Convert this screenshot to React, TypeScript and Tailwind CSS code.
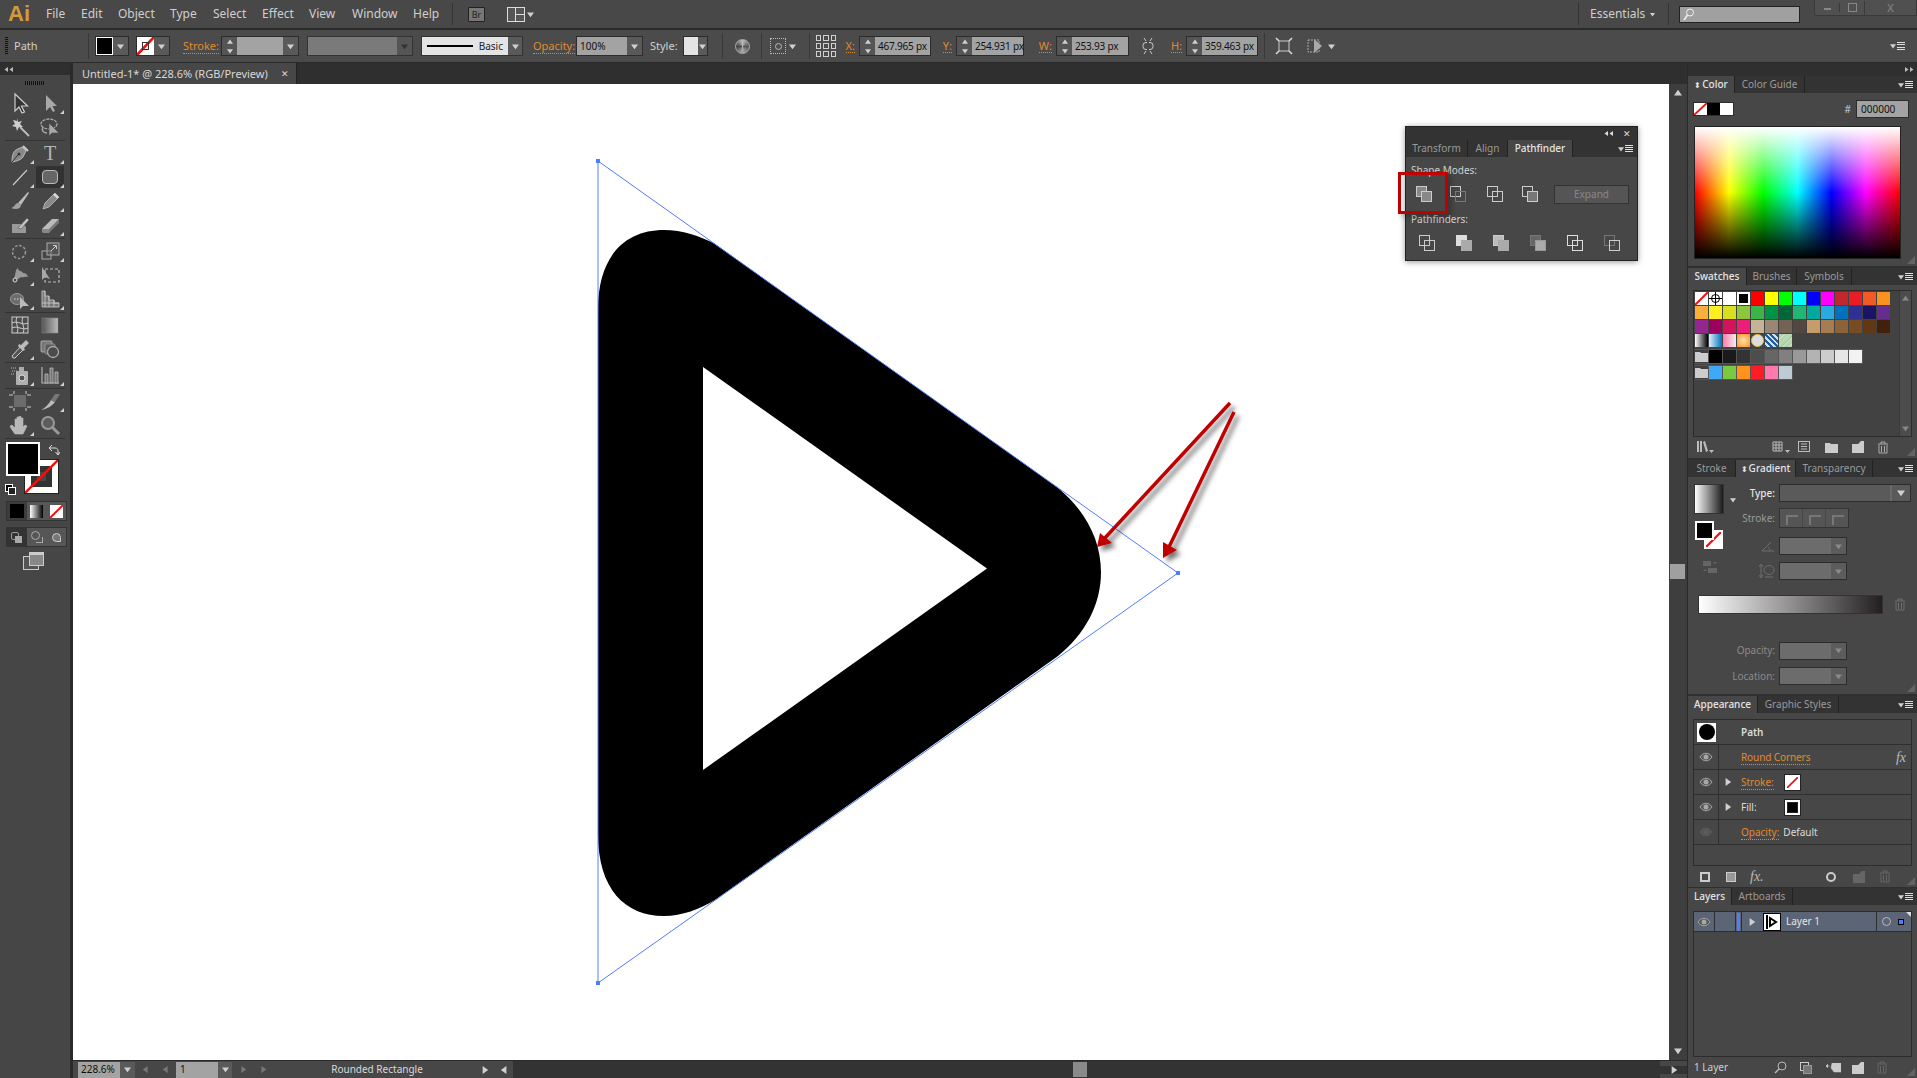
import React from "react";

type Dir = "up" | "down" | "left" | "right";

function Tri({ dir = "down", size = 7, className = "fill-[#d0d0d0]" }: { dir?: Dir; size?: number; className?: string }) {
  const pts = { up: "0,8 5,1 10,8", down: "0,2 10,2 5,9", left: "8,0 8,10 1,5", right: "2,0 2,10 9,5" }[dir];
  return (
    <svg width={size} height={size} viewBox="0 0 10 10" className="shrink-0">
      <polygon points={pts} className={className} />
    </svg>
  );
}

function Svg({ w = 22, h = 22, vb, children }: { w?: number; h?: number; vb?: string; children: React.ReactNode }) {
  return (
    <svg width={w} height={h} viewBox={vb ?? `0 0 ${w} ${h}`} className="shrink-0 block" fill="none">
      {children}
    </svg>
  );
}

const NoneSwatch = ({ className }: { className: string }) => (
  <div className={`relative shrink-0 overflow-hidden bg-white ${className}`}>
    <svg viewBox="0 0 20 20" className="absolute inset-0 h-full w-full" preserveAspectRatio="none">
      <line x1="0" y1="20" x2="20" y2="0" stroke="#f01010" strokeWidth="3" />
    </svg>
  </div>
);

const DoubleLeft = ({ className = "fill-[#bbb]" }: { className?: string }) => (
  <div className="flex">
    <Tri dir="left" size={5} className={className} />
    <Tri dir="left" size={5} className={className} />
  </div>
);

const toolIcons: Record<string, React.ReactNode> = {
  select: <path d="M6 2v17l4-4 3 6 2.500-1-3-6h6z" fill="#333" stroke="#ccc" strokeWidth="1.200" />,
  direct: <path d="M7 3v16l4-4 3 5 2-1-2.500-5H18z" fill="#a8a8a8" />,
  wand: (
    <>
      <path d="M11 11l9 9" stroke="#bbb" strokeWidth="2" />
      <path d="M8 2l1 4 4-1-2 3 3 3-4 0-2 4-1-4-4-1 3-2-2-4 4 1z" fill="#cfcfcf" />
    </>
  ),
  lasso: (
    <>
      <ellipse cx="10" cy="8" rx="8" ry="5" stroke="#aaa" strokeWidth="1.300" strokeDasharray="3 1" />
      <path d="M4 11c-2 4 1 6 4 6" stroke="#aaa" strokeWidth="1.300" />
      <path d="M10 7v13l3-3 7 0z" fill="#a8a8a8" stroke="#444" strokeWidth=".6" />
    </>
  ),
  pen: (
    <>
      <path d="M3 20c0-6 1-10 4-12l6-3 4 4-3 6c-2 3-6 4-11 5z" fill="#888" stroke="#ccc" strokeWidth=".8" />
      <path d="M3 20l6-7" stroke="#333" strokeWidth="1" />
      <circle cx="10" cy="12" r="1.500" fill="#333" />
      <path d="M14 4l5 5" stroke="#ccc" strokeWidth="2" />
    </>
  ),
  type: (
    <text x="11" y="18" textAnchor="middle" className="font-['Liberation_Serif',serif] text-[20px] fill-[#b4b4b4]">
      T
    </text>
  ),
  line: <path d="M4 19L18 4" stroke="#ccc" strokeWidth="1.100" />,
  rrect: <rect x="3.500" y="4.500" width="15" height="13" rx="3.500" fill="#666" stroke="#bbb" strokeWidth="1" />,
  brush: (
    <>
      <path d="M9 13L19 2l1 1-8 12z" fill="#bbb" />
      <path d="M9 13c-3 0-3 4-7 5 5 2 10 1 10-3z" fill="#a0a0a0" />
    </>
  ),
  pencil: (
    <>
      <path d="M4 19l2-6L16 3l4 4L10 17z" fill="#8a8a8a" stroke="#ccc" strokeWidth=".7" />
      <path d="M15 4l4 4" stroke="#ddd" strokeWidth="2" />
    </>
  ),
  blob: (
    <>
      <path d="M3 10h11l3 3v6H3z" fill="#999" />
      <path d="M9 14l9-10 2 2-8 9z" fill="#c4c4c4" stroke="#444" strokeWidth=".5" />
    </>
  ),
  eraser: (
    <>
      <path d="M3 15L13 5h7l-10 12H4z" fill="#bbb" />
      <path d="M3 15h7v4H4l-1-1z" fill="#888" />
      <path d="M10 15l10-10v4L10 19z" fill="#777" />
    </>
  ),
  rotate: <circle cx="10" cy="12" r="6.500" stroke="#999" strokeWidth="1.500" strokeDasharray="2.500 1.800" />,
  scale: (
    <>
      <rect x="3" y="11" width="9" height="8" stroke="#aaa" strokeWidth="1" />
      <rect x="8" y="3" width="12" height="12" stroke="#aaa" strokeWidth="1" fill="#666" fillOpacity=".4" />
      <path d="M12 11l5-5M14 5.500h3.500V9" stroke="#ccc" strokeWidth="1" />
    </>
  ),
  warp: (
    <>
      <path d="M5 15c2-6 1-9 4-11 0 4 4 2 5 5 3 0 4 1 5 4-3-1-4 1-7 0-2 2-4 2-7 2z" fill="#999" />
      <circle cx="6" cy="16" r="2" fill="#444" stroke="#ddd" strokeWidth="1" />
    </>
  ),
  free: (
    <>
      <rect x="6" y="5" width="14" height="13" stroke="#bbb" strokeWidth="1.200" strokeDasharray="3 2" />
      <path d="M3 3v13l3-3 5 2z" fill="#a8a8a8" />
    </>
  ),
  shape: (
    <>
      <ellipse cx="8" cy="11" rx="6.500" ry="5.500" fill="#6c6c6c" stroke="#999" />
      <path d="M5 11h6" stroke="#ddd" strokeDasharray="1.500 1.500" />
      <path d="M11 9v12l3-3h6z" fill="#bbb" />
    </>
  ),
  persp: <path d="M3 3h3v5h4v4h5v3h5v4H3zM6 3v16M10 8v11M15 12v7M3 15h17" fill="#777" stroke="#ccc" strokeWidth=".8" />,
  mesh: (
    <>
      <rect x="3" y="3" width="16" height="16" fill="#4c4c4c" stroke="#ccc" />
      <path d="M3 9c6-3 10 3 16 0M3 14c6-3 10 3 16 0M8 3c-3 6 3 10 0 16M14 3c-3 6 3 10 0 16" stroke="#ccc" />
    </>
  ),
  gradient: <rect x="3" y="4" width="16" height="15" fill="url(#toolgrad)" stroke="#888" strokeWidth=".5" />,
  dropper: (
    <>
      <path d="M4 20l-1-2L12 8l3 3-9 9z" fill="#555" stroke="#ccc" strokeWidth="1" />
      <path d="M12 7l5-5 3 3-5 5 1 2-2 1-5-5 1-2z" fill="#bbb" />
    </>
  ),
  blend: (
    <>
      <rect x="2" y="3" width="11" height="11" rx="1" fill="#777" stroke="#bbb" strokeWidth=".8" />
      <rect x="6" y="6" width="10" height="10" rx="1" fill="#5c5c5c" stroke="#999" strokeWidth=".8" />
      <circle cx="14" cy="14" r="5.500" fill="#4c4c4c" stroke="#aaa" strokeWidth="1.300" />
    </>
  ),
  spray: (
    <>
      <path d="M2 4h5M3 7h5M2 10h4" stroke="#bbb" strokeDasharray="1 1" />
      <rect x="10" y="3" width="5" height="4" fill="#aaa" />
      <rect x="7" y="7" width="12" height="14" rx="1" fill="#b0b0b0" />
      <circle cx="13" cy="14" r="3" fill="#555" stroke="#ddd" />
    </>
  ),
  graph: (
    <>
      <path d="M3 3v16h17" stroke="#bbb" strokeWidth="1.100" />
      <path d="M6 10h3v9H6zM11 4h3v15h-3zM16 8h3v11h-3z" fill="#777" stroke="#bbb" strokeWidth=".8" />
    </>
  ),
  artboard: (
    <>
      <rect x="5" y="5" width="12" height="12" fill="#6c6c6c" />
      <path d="M5 1v3M17 1v3M5 18v3M17 18v3M0 5h4M0 17h4M18 5h4M18 17h4" stroke="#ccc" strokeWidth="1" />
    </>
  ),
  slice: (
    <>
      <path d="M2 20c4-2 8-6 10-10l4 2c-3 4-8 7-14 8z" fill="#bbb" />
      <path d="M12 10l4-6h5l-5 8z" fill="#777" />
    </>
  ),
  hand: (
    <path
      d="M6 20c-2-3-4-5-5-8l2-1 3 3V5h2v6V3h2v8-8.500h2V11 4h2v9l2-2 2 1-4 8z"
      fill="#b8b8b8"
      stroke="#bbb"
      strokeWidth=".6"
    />
  ),
  zoom: (
    <>
      <circle cx="9" cy="9" r="6" fill="#5c5c5c" stroke="#999" strokeWidth="2" />
      <path d="M13.500 13.500L20 20" stroke="#999" strokeWidth="3" />
    </>
  ),
};

function Tool({ name, corner, active }: { name: string; corner?: boolean; active?: boolean }) {
  return (
    <div className="relative flex h-[24px] w-[30px] items-center justify-center">
      {active && <div className="absolute inset-x-[1px] inset-y-[1px] bg-[#323232]" />}
      <div className="relative">
        <Svg>{toolIcons[name]}</Svg>
      </div>
      {corner && <div className="absolute bottom-[1px] right-[1px] h-0 w-0 border-b-[4px] border-l-[4px] border-b-[#d0d0d0] border-l-transparent" />}
    </div>
  );
}

const ToolSep = () => <div className="mx-[5px] my-[0.5px] h-px shrink-0 bg-[#333]" />;

function ToolRow({ a, b, ca, cb, active }: { a: string; b: string; ca?: boolean; cb?: boolean; active?: boolean }) {
  return (
    <div className="flex pl-[5px]">
      <Tool name={a} corner={ca} />
      <Tool name={b} corner={cb} active={active} />
    </div>
  );
}

function LeftToolbar() {
  return (
    <div className="flex w-[73px] shrink-0 flex-col border-r-[3px] border-[#2a2a2a] bg-[#464646]">
      <div className="flex h-[12px] items-center bg-[#2f2f2f] pl-[4px]">
        <DoubleLeft />
      </div>
      <div className="flex h-[16px] items-center justify-center">
        <div className="h-[4px] w-[20px] bg-[repeating-linear-gradient(to_right,#111_0,#111_1px,transparent_1px,transparent_2px)]" />
      </div>
      <ToolRow a="select" b="direct" cb />
      <ToolRow a="wand" b="lasso" />
      <ToolSep />
      <ToolRow a="pen" b="type" ca cb />
      <ToolRow a="line" b="rrect" ca cb active />
      <ToolRow a="brush" b="pencil" cb />
      <ToolRow a="blob" b="eraser" cb />
      <ToolSep />
      <ToolRow a="rotate" b="scale" ca cb />
      <ToolRow a="warp" b="free" ca />
      <ToolRow a="shape" b="persp" ca cb />
      <ToolSep />
      <ToolRow a="mesh" b="gradient" />
      <ToolRow a="dropper" b="blend" ca />
      <ToolSep />
      <ToolRow a="spray" b="graph" ca cb />
      <ToolSep />
      <ToolRow a="artboard" b="slice" cb />
      <ToolRow a="hand" b="zoom" ca />
      <ToolSep />
      <div className="relative mt-[3px] h-[53px] shrink-0">
        <div className="absolute left-[24px] top-[17px] h-[35px] w-[35px] border border-[#222] bg-white p-[6px]">
          <div className="h-full w-full border-[6px] border-[#333] bg-[#474747]" />
          <svg viewBox="0 0 35 35" className="absolute inset-0">
            <line x1="0" y1="35" x2="35" y2="0" stroke="#f01010" strokeWidth="2.500" />
          </svg>
        </div>
        <div className="absolute left-[6px] top-0 h-[34px] w-[34px] border-2 border-white bg-black" />
        <svg width="12" height="12" viewBox="0 0 12 12" className="absolute left-[48px] top-[2px]" fill="none">
          <path d="M1 4h6c2 0 3 1 3 3v4M1 4l3-3M1 4l3 3M10 11l-2.500-3M10 11l2-3" stroke="#ddd" />
        </svg>
        <div className="absolute left-[5px] top-[42px] h-[8px] w-[8px] border border-white bg-black" />
        <div className="absolute left-[8px] top-[45px] h-[8px] w-[8px] border border-white bg-[#222]" />
      </div>
      <div className="mx-[6px] mt-[6px] flex h-[20px] w-[61px] border border-[#333] bg-[#3c3c3c]">
        <div className="flex flex-1 items-center justify-center">
          <div className="h-[14px] w-[14px] bg-black" />
        </div>
        <div className="flex flex-1 items-center justify-center bg-[#565656]">
          <div className="h-[13px] w-[13px] bg-[linear-gradient(to_right,#fff,#000)]" />
        </div>
        <div className="flex flex-1 items-center justify-center bg-[#565656]">
          <NoneSwatch className="h-[13px] w-[13px]" />
        </div>
      </div>
      <div className="mx-[6px] mt-[6px] flex h-[20px] w-[61px] border border-[#333] bg-[#565656]">
        <div className="flex flex-1 items-center justify-center bg-[#333]">
          <div className="relative h-[11px] w-[11px]">
            <div className="absolute left-0 top-0 h-[8px] w-[8px] rounded-[2px] border border-[#999]" />
            <div className="absolute bottom-0 right-0 h-[7px] w-[7px] bg-[#aaa]" />
          </div>
        </div>
        <div className="flex flex-1 items-center justify-center">
          <div className="relative h-[12px] w-[12px]">
            <div className="absolute left-0 top-0 h-[9px] w-[9px] rounded-full border border-[#aaa]" />
            <div className="absolute bottom-0 right-0 h-[6px] w-[7px] border-b border-r border-[#aaa]" />
          </div>
        </div>
        <div className="flex flex-1 items-center justify-center">
          <div className="h-[9px] w-[9px] rounded-full rounded-br-none border border-[#ccc] bg-[#777]" />
        </div>
      </div>
      <div className="relative mt-[3px] h-[24px]">
        <div className="absolute left-[23px] top-[6px] h-[14px] w-[16px] border border-[#ccc] bg-[#555]" />
        <div className="absolute left-[29px] top-[2px] h-[14px] w-[15px] border-x border-b border-t-[3px] border-[#ccc] bg-[#888]" />
      </div>
    </div>
  );
}

function MenuBar() {
  const items = [
    ["File", "w-[35px]"],
    ["Edit", "w-[37px]"],
    ["Object", "w-[52px]"],
    ["Type", "w-[43px]"],
    ["Select", "w-[49px]"],
    ["Effect", "w-[47px]"],
    ["View", "w-[43px]"],
    ["Window", "w-[61px]"],
    ["Help", "w-[39px]"],
  ];
  return (
    <div className="flex h-[30px] shrink-0 items-center border-b-2 border-[#2a2a2a] bg-[#484848] text-[12px] text-[#cfcfcf]">
      <div className="ml-[8px] w-[38px] font-['Liberation_Sans',sans-serif] text-[22px] font-bold leading-none text-[#d39a3c]">Ai</div>
      {items.map(([label, w]) => (
        <div key={label} className={w}>
          {label}
        </div>
      ))}
      <div className="h-[22px] w-px bg-[#333]" />
      <div className="ml-[15px] flex h-[15px] w-[17px] items-center justify-center rounded-[1px] border border-[#222] bg-[#777] text-[9px] leading-none text-[#222]">
        Br
      </div>
      <div className="ml-[22px] flex h-[15px] w-[18px] border border-[#ddd]">
        <div className="w-[8px] border-r border-[#ddd] bg-[#555]" />
        <div className="flex flex-1 flex-col bg-[#555]">
          <div className="flex-1 border-b border-[#ddd]" />
          <div className="flex-1" />
        </div>
      </div>
      <div className="ml-[2px]">
        <Tri />
      </div>
      <div className="ml-auto flex h-full items-center">
        <div className="h-[22px] w-px bg-[#333]" />
        <div className="ml-[11px] w-[52px]">Essentials</div>
        <div className="ml-[8px]">
          <Tri size={5} />
        </div>
        <div className="ml-[13px] h-[22px] w-px bg-[#333]" />
        <div className="ml-[10px] flex h-[17px] w-[121px] items-center border border-[#222] bg-[#a0a0a0] pl-[3px]">
          <Svg w={11} h={13}>
            <circle cx="7" cy="4.500" r="3.500" stroke="#eee" />
            <path d="M4.500 7L1 12" stroke="#eee" strokeWidth="1.500" />
          </Svg>
        </div>
        <div className="ml-[14px] flex h-[16px] w-[103px] items-center self-start rounded-b-[2px] border border-t-0 border-[#3a3a3a] bg-[#505050] text-[#888]">
          <div className="flex w-[24px] justify-center">
            <div className="mt-[3px] h-[2px] w-[7px] bg-[#888]" />
          </div>
          <div className="flex w-[25px] justify-center border-l border-[#3a3a3a]">
            <div className="h-[9px] w-[9px] border border-[#888]" />
          </div>
          <div className="flex flex-1 justify-center border-l border-[#3a3a3a] text-[11px] leading-[14px]">X</div>
        </div>
      </div>
    </div>
  );
}

const Sep = ({ className = "" }: { className?: string }) => <div className={`h-[26px] w-px shrink-0 bg-[#383838] ${className}`} />;
const DropBtn = ({ className = "w-[15px]" }: { className?: string }) => (
  <div className={`flex h-[18px] shrink-0 items-center justify-center bg-[#5a5a5a] ${className}`}>
    <Tri size={7} />
  </div>
);
const Spinner = () => (
  <div className="flex h-full w-[15px] shrink-0 flex-col items-center justify-around bg-[#555]">
    <Tri dir="up" size={6} />
    <Tri dir="down" size={6} />
  </div>
);
const Orange = ({ children, className = "" }: { children: React.ReactNode; className?: string }) => (
  <span className={`border-b border-dotted border-[#e08a2e] leading-[13px] text-[#e08a2e] ${className}`}>{children}</span>
);

function Field({ value, w }: { value: string; w: string }) {
  return (
    <div className="flex h-[20px] shrink-0 items-center border border-[#2c2c2c]">
      <Spinner />
      <div className={`flex h-full items-center whitespace-nowrap bg-[#a3a3a3] pl-[3px] text-[10px] tracking-[-0.2px] text-[#111] ${w}`}>{value}</div>
    </div>
  );
}

function XLabel({ label, w }: { label: string; w: string }) {
  return (
    <div className={`flex shrink-0 justify-end pr-[4px] ${w}`}>
      <Orange>{label}</Orange>
    </div>
  );
}

function ControlBar() {
  return (
    <div className="flex h-[33px] shrink-0 items-center border-b border-[#2a2a2a] bg-[#4b4b4b] pl-[5px] text-[11px] text-[#d0d0d0]">
      <div className="h-[18px] w-[3px] bg-[repeating-linear-gradient(to_bottom,#111_0,#111_1px,transparent_1px,transparent_2px)]" />
      <div className="ml-[6px] w-[74px]">Path</div>
      <Sep />
      <div className="ml-[6px] flex w-[34px] border border-[#2c2c2c]">
        <div className="h-[18px] w-[19px] border border-white bg-black" />
        <DropBtn className="w-[15px]" />
      </div>
      <div className="ml-[7px] flex w-[34px] border border-[#2c2c2c]">
        <div className="relative h-[18px] w-[19px]">
          <NoneSwatch className="h-full w-full" />
          <div className="absolute inset-[5px] border border-[#333]" />
        </div>
        <DropBtn className="w-[15px]" />
      </div>
      <div className="ml-[13px] w-[38px]">
        <Orange>Stroke:</Orange>
      </div>
      <div className="flex h-[20px] w-[78px] border border-[#2c2c2c]">
        <Spinner />
        <div className="h-[18px] flex-1 bg-[#a3a3a3]" />
        <DropBtn />
      </div>
      <div className="ml-[8px] flex w-[106px] border border-[#333]">
        <div className="h-[18px] flex-1 bg-[#7a7a7a]" />
        <div className="flex h-[18px] w-[15px] items-center justify-center bg-[#555]">
          <Tri size={7} className="fill-[#333]" />
        </div>
      </div>
      <div className="ml-[8px] flex w-[102px] border border-[#333]">
        <div className="flex h-[18px] flex-1 items-center justify-between bg-[#e4e4e4] px-[5px] text-[10px] text-[#222]">
          <div className="h-[2px] w-[46px] bg-black" />
          <span>Basic</span>
        </div>
        <DropBtn className="w-[14px]" />
      </div>
      <div className="ml-[10px] w-[43px]">
        <Orange>Opacity:</Orange>
      </div>
      <div className="flex w-[67px] border border-[#2c2c2c]">
        <div className="flex h-[18px] flex-1 items-center bg-[#a3a3a3] pl-[3px] text-[10px] text-[#111]">100%</div>
        <DropBtn />
      </div>
      <div className="ml-[7px] w-[33px]">Style:</div>
      <div className="flex w-[25px] border border-[#2c2c2c]">
        <div className="h-[18px] flex-1 bg-[#e4e4e4]" />
        <DropBtn className="w-[9px]" />
      </div>
      <Sep className="ml-[14px]" />
      <div className="ml-[9px] flex w-[20px] justify-center">
        <div className="h-[15px] w-[15px] rounded-full border border-[#aaa] bg-[conic-gradient(#bbb,#555,#aaa,#444,#bbb)]" />
      </div>
      <Sep className="ml-[9px]" />
      <div className="ml-[8px] flex w-[32px] items-center">
        <div className="flex h-[16px] w-[16px] items-center justify-center border border-dotted border-[#bbb]">
          <div className="h-[7px] w-[7px] rounded-full border border-[#bbb]" />
        </div>
        <div className="ml-[3px]">
          <Tri />
        </div>
      </div>
      <Sep className="ml-[7px]" />
      <div className="ml-[6px] grid h-[22px] w-[20px] shrink-0 grid-cols-3 gap-[2px]">
        {Array.from({ length: 9 }).map((_, i) => (
          <div key={i} className="border border-[#d0d0d0]" />
        ))}
      </div>
      <div className="ml-[3px]" />
      <XLabel label="X:" w="w-[20px]" />
      <Field value="467.965 px" w="w-[55px]" />
      <XLabel label="Y:" w="w-[25px]" />
      <Field value="254.931 px" w="w-[51px]" />
      <XLabel label="W:" w="w-[32px]" />
      <Field value="253.93 px" w="w-[56px]" />
      <div className="ml-[9px] flex w-[20px] justify-center">
        <Svg w={14} h={20}>
          <path d="M3 2l2 3M11 2L9 5M3 18l2-3M11 18l-2-3" stroke="#ccc" />
          <rect x="2" y="6.500" width="10" height="7" rx="3" stroke="#ccc" />
          <path d="M7 6v8" stroke="#4b4b4b" strokeWidth="2" />
        </Svg>
      </div>
      <XLabel label="H:" w="w-[28px]" />
      <Field value="359.463 px" w="w-[55px]" />
      <Sep className="ml-[6px]" />
      <div className="ml-[10px] flex w-[18px] justify-center">
        <Svg w={18} h={18}>
          <rect x="4" y="4" width="10" height="10" stroke="#ccc" />
          <path d="M1 1l3 3M17 1l-3 3M1 17l3-3M17 17l-3-3" stroke="#ddd" strokeWidth="1.500" />
        </Svg>
      </div>
      <div className="ml-[13px] flex w-[33px] items-center">
        <Svg w={18} h={18}>
          <rect x="2" y="3" width="11" height="12" stroke="#aaa" strokeDasharray="2 1" />
          <path d="M8 2v14l8-7z" fill="#aaa" />
        </Svg>
        <div className="ml-[4px]">
          <Tri />
        </div>
      </div>
      <div className="ml-auto mr-[12px]">
        <PanelMenu />
      </div>
    </div>
  );
}

function PanelMenu() {
  return (
    <div className="flex items-center">
      <Tri size={6} />
      <div className="ml-[1px] flex h-[8px] w-[8px] flex-col justify-between">
        <div className="h-px bg-[#ddd]" />
        <div className="h-px bg-[#ddd]" />
        <div className="h-px bg-[#ddd]" />
        <div className="h-px bg-[#ddd]" />
      </div>
    </div>
  );
}

function Tabs({ tabs, arrows }: { tabs: [string, string, boolean?][]; arrows?: boolean }) {
  return (
    <div className="flex h-[17px] shrink-0 items-stretch bg-[#333] text-[10px] leading-[17px]">
      {tabs.map(([label, w, active]) => (
        <div
          key={label}
          className={`flex items-center justify-center border-r border-[#222] ${w} ${active ? "bg-[#474747] font-medium text-[#e4e4e4]" : "text-[#9a9a9a]"}`}
        >
          {active && arrows && <span className="mr-[1px] text-[8px] leading-none">⬍</span>}
          {label}
        </div>
      ))}
      <div className="ml-auto mr-[4px] flex items-center">
        <PanelMenu />
      </div>
    </div>
  );
}

const Grip = () => (
  <svg width="10" height="10" viewBox="0 0 10 10" className="absolute bottom-[1px] right-[1px]">
    <path d="M9 1v8H1z" fill="#777" opacity=".6" />
  </svg>
);

const Trash = ({ color = "#aaa" }: { color?: string }) => (
  <Svg w={12} h={13}>
    <path d="M1 3h10M4 3V1h4v2M2 4v8h8V4M4.500 5v6M7.500 5v6" stroke={color} />
  </Svg>
);
const NewPage = ({ color = "#ccc" }: { color?: string }) => (
  <Svg w={12} h={12}>
    <path d="M0 3h6v0l3-3h3v12H0z" fill={color} />
  </Svg>
);
const Folder = ({ color = "#ccc" }: { color?: string }) => (
  <Svg w={13} h={11}>
    <path d="M0 1h5l1 1h7v9H0z" fill={color} />
  </Svg>
);

const colorRows = [
  ["#ff0000", "#ffff00", "#00ff00", "#00ffff", "#0000ff", "#ff00ff", "#c1272d", "#ed1c24", "#f15a24", "#f7931e"],
  ["#fbb03b", "#fcee21", "#d9e021", "#8cc63f", "#39b54a", "#009245", "#006837", "#22b573", "#00a99d", "#29abe2", "#0071bc", "#2e3192", "#1b1464", "#662d91"],
  ["#93278f", "#9e005d", "#d4145a", "#ed1e79", "#c7b299", "#998675", "#736357", "#534741", "#c69c6d", "#a67c52", "#8c6239", "#754c24", "#603813", "#42210b"],
];
const grays = ["#000000", "#1a1a1a", "#333333", "#4d4d4d", "#666666", "#808080", "#999999", "#b3b3b3", "#cccccc", "#e6e6e6", "#f2f2f2"];
const brights = ["#3fa9f5", "#7ac943", "#ff931e", "#ff1d25", "#ff7bac", "#bdccd4"];

const Cell = ({ color }: { color: string }) => (
  <div className="h-[13px] w-[13px] shrink-0" style={{ backgroundColor: color }} />
);

function ColorPanel() {
  return (
    <div className="flex h-[192px] shrink-0 flex-col border-b-2 border-[#2f2f2f]">
      <Tabs arrows tabs={[["Color", "w-[47px]", true], ["Color Guide", "w-[70px]"]]} />
      <div className="relative flex-1 bg-[#474747] px-[5px] pt-[9px]">
        <div className="flex h-[14px] items-center justify-between pr-[3px]">
          <div className="flex border border-[#2c2c2c]">
            <NoneSwatch className="h-[12px] w-[13px]" />
            <div className="h-[12px] w-[13px] bg-black" />
            <div className="h-[12px] w-[13px] bg-white" />
          </div>
          <div className="flex items-center">
            <span className="mr-[5px] text-[10px] text-[#ccc]">#</span>
            <div className="h-[18px] w-[53px] border border-[#2c2c2c] bg-[#a3a3a3] pl-[4px] text-[10px] leading-[16px] text-[#111]">000000</div>
          </div>
        </div>
        <div className="ml-[1px] mt-[10px] h-[133px] w-[207px] border border-[#222] bg-[linear-gradient(to_bottom,#ffffff_0%,transparent_50%,#000000_100%),linear-gradient(to_right,#ff0000,#ffff00,#00ff00,#00ffff,#0000ff,#ff00ff,#ff0000)]" />
        <Grip />
      </div>
    </div>
  );
}

function SwatchesPanel() {
  return (
    <div className="flex h-[192px] shrink-0 flex-col border-b-2 border-[#2f2f2f]">
      <Tabs tabs={[["Swatches", "w-[59px]", true], ["Brushes", "w-[50px]"], ["Symbols", "w-[55px]"]]} />
      <div className="relative flex-1 bg-[#474747] px-[5px] pt-[5px]">
        <div className="flex h-[147px] border border-[#2c2c2c] bg-[#424242]">
          <div className="flex-1 pl-[1px] pt-[1px]">
            <div className="flex gap-px">
              <NoneSwatch className="h-[13px] w-[13px]" />
              <div className="relative flex h-[13px] w-[13px] shrink-0 items-center justify-center bg-white">
                <div className="h-[9px] w-[9px] rounded-full border border-black" />
                <div className="absolute h-px w-full bg-black" />
                <div className="absolute h-full w-px bg-black" />
              </div>
              <Cell color="#ffffff" />
              <div className="h-[13px] w-[13px] shrink-0 border-2 border-white bg-black" />
              {colorRows[0].map((c) => (
                <Cell key={c} color={c} />
              ))}
            </div>
            {colorRows.slice(1).map((row, i) => (
              <div key={i} className="mt-px flex gap-px">
                {row.map((c) => (
                  <Cell key={c} color={c} />
                ))}
              </div>
            ))}
            <div className="mt-px flex gap-px">
              <div className="h-[13px] w-[13px] bg-[linear-gradient(to_right,#fff,#000)]" />
              <div className="h-[13px] w-[13px] bg-[linear-gradient(to_right,#dff0fb,#0071bc)]" />
              <div className="h-[13px] w-[13px] bg-[linear-gradient(to_right,#ff7bac,#eee)]" />
              <div className="h-[13px] w-[13px] bg-[radial-gradient(circle,#ffe0b0,#f7931e)]" />
              <div className="h-[13px] w-[13px] rounded-full border border-[#e3c13b] bg-[#ddd]" />
              <div className="h-[13px] w-[13px] bg-[repeating-linear-gradient(45deg,#1f5f99,#1f5f99_2px,#cfe0ee_2px,#cfe0ee_4px)]" />
              <div className="h-[13px] w-[13px] bg-[repeating-linear-gradient(-45deg,#b5d6a8,#b5d6a8_2px,#dfe8b8_2px,#8ac5c5_4px)]" />
            </div>
            <div className="mt-[2px] flex w-fit gap-px bg-[#555] py-px pr-px">
              <div className="flex h-[13px] w-[13px] items-center justify-center bg-[#404040]">
                <Folder />
              </div>
              {grays.map((c) => (
                <Cell key={c} color={c} />
              ))}
            </div>
            <div className="mt-[1px] flex w-fit gap-px bg-[#555] py-px pr-px">
              <div className="flex h-[13px] w-[13px] items-center justify-center bg-[#404040]">
                <Folder />
              </div>
              {brights.map((c) => (
                <Cell key={c} color={c} />
              ))}
            </div>
          </div>
          <div className="flex w-[12px] flex-col items-center justify-between border-l border-[#3a3a3a] bg-[#4c4c4c] py-[4px]">
            <Tri dir="up" className="fill-[#888]" />
            <Tri dir="down" className="fill-[#888]" />
          </div>
        </div>
        <div className="flex h-[20px] items-center">
          <div className="ml-[3px] w-[76px]">
            <Svg w={18} h={12}>
              <path d="M1 0v11h2V0zM4 0v11h2V0zM7 1l3 10 2-1L9 0zM13 9h5l-2.500 3z" fill="#bbb" />
            </Svg>
          </div>
          <div className="w-[27px]">
            <Svg w={18} h={12}>
              <path d="M1 1h9v9H1zM4 1v9M7 1v9M1 4h9M1 7h9" stroke="#bbb" />
              <path d="M13 9h5l-2.500 3z" fill="#bbb" />
            </Svg>
          </div>
          <div className="ml-[-1px] w-[27px]">
            <Svg w={12} h={12}>
              <rect x=".5" y=".5" width="11" height="10" stroke="#bbb" />
              <path d="M3 3h6M3 5.500h6M3 8h6" stroke="#bbb" />
            </Svg>
          </div>
          <div className="w-[27px]">
            <Folder />
          </div>
          <div className="w-[25px]">
            <NewPage />
          </div>
          <Trash />
        </div>
        <Grip />
      </div>
    </div>
  );
}

function GLabel({ children, className = "text-[#9a9a9a]" }: { children: React.ReactNode; className?: string }) {
  return <div className={`flex w-[39px] shrink-0 justify-end whitespace-nowrap text-[10px] ${className}`}>{children}</div>;
}

function GDrop() {
  return (
    <div className="ml-[4px] flex h-[18px] w-[68px] border border-[#2c2c2c]">
      <div className="flex-1 bg-[#6c6c6c]" />
      <div className="flex w-[15px] items-center justify-center bg-[#5c5c5c]">
        <Tri size={7} className="fill-[#8a8a8a]" />
      </div>
    </div>
  );
}

function GradientPanel() {
  return (
    <div className="flex h-[236px] shrink-0 flex-col border-b-2 border-[#2f2f2f]">
      <Tabs arrows tabs={[["Stroke", "w-[48px]"], ["Gradient", "w-[60px]", true], ["Transparency", "w-[77px]"]]} />
      <div className="relative flex-1 bg-[#474747] pt-[7px]">
        <div className="flex">
          <div className="relative h-[98px] w-[48px] shrink-0 pl-[6px]">
            <div className="h-[30px] w-[30px] border border-[#333] bg-[linear-gradient(to_right,#ffffff,#1a1a1a)]" />
            <div className="absolute left-[42px] top-[13px]">
              <Tri size={6} />
            </div>
            <div className="absolute left-[16px] top-[46px] h-[19px] w-[19px] border border-white bg-white p-[1px]">
              <NoneSwatch className="h-full w-full" />
            </div>
            <div className="absolute left-[7px] top-[37px] h-[19px] w-[19px] border-2 border-white bg-black" />
            <div className="absolute left-[14px] top-[76px]">
              <Svg w={16} h={14}>
                <rect x="1" y="1" width="8" height="5" fill="#666" />
                <rect x="6" y="8" width="9" height="5" fill="#666" />
                <path d="M11 2h4l-2 2zM1 11h4L3 9z" fill="#666" />
              </Svg>
            </div>
          </div>
          <div className="flex flex-col">
            <div className="flex h-[18px] items-center">
              <GLabel className="font-medium text-[#e4e4e4]">Type:</GLabel>
              <div className="ml-[4px] flex h-[18px] w-[132px] border border-[#2c2c2c]">
                <div className="flex-1 border-r-2 border-[#6a6a6a] bg-[#5a5a5a]" />
                <div className="flex w-[18px] items-center justify-center bg-[#5a5a5a]">
                  <Tri size={8} />
                </div>
              </div>
            </div>
            <div className="mt-[6px] flex h-[20px] items-center">
              <GLabel>Stroke:</GLabel>
              <div className="ml-[4px] flex h-[20px] w-[70px] gap-px border border-[#333]">
                {[0, 1, 2].map((i) => (
                  <div key={i} className="flex flex-1 items-center justify-center bg-[#555]">
                    <div className="h-[10px] w-[12px] translate-x-[1px] translate-y-[2px] border-l-2 border-t-2 border-[#777]" />
                  </div>
                ))}
              </div>
            </div>
            <div className="mt-[9px] flex h-[18px] items-center">
              <GLabel>
                <Svg w={14} h={12}>
                  <path d="M1 11h12M1 11L10 2M9 11c0-2-1-3-2-4" stroke="#6e6e6e" />
                </Svg>
              </GLabel>
              <GDrop />
            </div>
            <div className="mt-[7px] flex h-[18px] items-center">
              <GLabel>
                <Svg w={16} h={16}>
                  <ellipse cx="10" cy="7" rx="5" ry="4.500" stroke="#6e6e6e" />
                  <path d="M2 2v12M0 4l2-3 2 3M0 12l2 3 2-3M6 14h8" stroke="#6e6e6e" />
                </Svg>
              </GLabel>
              <GDrop />
            </div>
          </div>
        </div>
        <div className="mt-[13px] flex h-[19px] items-center pl-[10px]">
          <div className="h-[19px] w-[185px] border border-[#333] bg-[linear-gradient(to_right,#ffffff,#231f20)]" />
          <div className="ml-[11px]">
            <Trash color="#6e6e6e" />
          </div>
        </div>
        <div className="ml-[48px] mt-[27px] flex h-[19px] items-center">
          <GLabel className="text-[#8a8a8a]">Opacity:</GLabel>
          <GDrop />
        </div>
        <div className="ml-[48px] mt-[7px] flex h-[18px] items-center">
          <GLabel className="text-[#8a8a8a]">Location:</GLabel>
          <GDrop />
        </div>
        <Grip />
      </div>
    </div>
  );
}

const Eye = ({ color = "#a8a8a8" }: { color?: string }) => (
  <Svg w={14} h={10}>
    <path d="M1 5c3-5 9-5 12 0-3 5-9 5-12 0z" stroke={color} fill="#555" />
    <circle cx="7" cy="5" r="2.500" fill={color} />
  </Svg>
);

function ApRow({ eye = "#a8a8a8", children }: { eye?: string; children: React.ReactNode }) {
  return (
    <div className="flex h-[25px] border-b border-[#2f2f2f]">
      <div className="flex w-[25px] items-center justify-center border-r border-[#2f2f2f]">
        <Eye color={eye} />
      </div>
      <div className="relative flex flex-1 items-center">{children}</div>
    </div>
  );
}

function AppearancePanel() {
  return (
    <div className="flex h-[192px] shrink-0 flex-col border-b-2 border-[#2f2f2f]">
      <Tabs tabs={[["Appearance", "w-[70px]", true], ["Graphic Styles", "w-[81px]"]]} />
      <div className="relative flex-1 bg-[#474747] px-[5px] pt-[6px]">
        <div className="h-[147px] border border-[#2c2c2c] text-[10px] text-[#dcdcdc]">
          <div className="flex h-[25px] items-center border-b border-[#2f2f2f]">
            <div className="ml-[3px] flex h-[19px] w-[19px] items-center justify-center bg-white">
              <div className="h-[16px] w-[16px] rounded-full bg-black" />
            </div>
            <span className="ml-[25px] font-semibold">Path</span>
          </div>
          <ApRow>
            <div className="ml-[22px] tracking-[-0.1px]">
              <Orange>Round Corners</Orange>
            </div>
            <span className="absolute right-[5px] font-['Liberation_Serif',serif] text-[14px] italic text-[#bbb]">fx</span>
          </ApRow>
          <ApRow>
            <div className="ml-[5px] w-[17px]">
              <Tri dir="right" size={8} />
            </div>
            <div className="w-[43px]">
              <Orange>Stroke:</Orange>
            </div>
            <div className="h-[17px] w-[17px] border border-[#222] bg-white p-[2px]">
              <NoneSwatch className="h-full w-full" />
            </div>
          </ApRow>
          <ApRow>
            <div className="ml-[5px] w-[17px]">
              <Tri dir="right" size={8} />
            </div>
            <div className="w-[43px]">Fill:</div>
            <div className="h-[17px] w-[17px] border border-[#222] bg-white p-[2px]">
              <div className="h-full w-full border border-[#222] bg-black" />
            </div>
          </ApRow>
          <ApRow eye="#5c5c5c">
            <div className="ml-[22px]">
              <Orange>Opacity:</Orange>
            </div>
            <span className="ml-[4px]">Default</span>
          </ApRow>
        </div>
        <div className="flex h-[21px] items-center">
          <div className="ml-[7px] h-[10px] w-[10px] border-2 border-[#ccc]" />
          <div className="ml-[16px] h-[10px] w-[10px] border border-[#ccc] bg-[#999]" />
          <span className="ml-[14px] w-[76px] font-['Liberation_Serif',serif] text-[14px] italic leading-none text-[#bbb]">fx.</span>
          <div className="h-[10px] w-[10px] rounded-full border-2 border-[#ccc]" />
          <div className="ml-[17px]">
            <NewPage color="#666" />
          </div>
          <div className="ml-[14px]">
            <Trash color="#666" />
          </div>
        </div>
        <Grip />
      </div>
    </div>
  );
}

function LayersPanel() {
  return (
    <div className="flex flex-1 flex-col">
      <Tabs tabs={[["Layers", "w-[44px]", true], ["Artboards", "w-[61px]"]]} />
      <div className="relative flex-1 bg-[#474747] px-[5px] pt-[6px]">
        <div className="h-[146px] border border-[#2c2c2c]">
          <div className="relative flex h-[20px] items-center border-b border-[#2c2c2c] bg-[#5b6576] text-[10px] text-[#e4e4e4]">
            <div className="flex h-full w-[21px] items-center justify-center border-r border-[#2f2f2f]">
              <Eye />
            </div>
            <div className="h-full w-[21px] border-r border-[#2f2f2f]" />
            <div className="flex h-full w-[6px] items-center border-r border-[#2f2f2f]">
              <div className="ml-[1px] h-[18px] w-[3px] bg-[#4f7dff]" />
            </div>
            <div className="ml-[6px] w-[15px]">
              <Tri dir="right" size={8} />
            </div>
            <div className="h-[18px] w-[18px] border border-black bg-white">
              <Svg w={16} h={16}>
                <path d="M3 1v14M6 4l6 4-6 4z" stroke="#000" strokeWidth="2" />
              </Svg>
            </div>
            <span className="ml-[5px] flex-1">Layer 1</span>
            <div className="flex h-full w-[35px] items-center border-l border-[#2f2f2f] pl-[5px]">
              <div className="h-[9px] w-[9px] rounded-full border border-[#bbb]" />
              <div className="ml-[7px] h-[6px] w-[6px] border border-black bg-[#4f7dff]" />
            </div>
            <div className="absolute right-0 top-0 h-0 w-0 border-l-[5px] border-t-[5px] border-l-transparent border-t-[#ddd]" />
          </div>
        </div>
        <div className="flex h-[21px] items-center text-[10px] text-[#cfcfcf]">
          <div className="w-[81px] pl-[1px]">1 Layer</div>
          <div className="w-[26px]">
            <Svg w={13} h={13}>
              <circle cx="8" cy="5" r="4" stroke="#bbb" />
              <path d="M5 8l-4 4" stroke="#bbb" strokeWidth="1.500" />
            </Svg>
          </div>
          <div className="w-[26px]">
            <Svg w={12} h={12}>
              <rect x=".5" y=".5" width="8" height="8" stroke="#ccc" />
              <rect x="3.500" y="3.500" width="8" height="8" fill="#777" stroke="#999" />
            </Svg>
          </div>
          <div className="w-[26px]">
            <Svg w={15} h={10}>
              <path d="M0 3h4M2 1l-2 2 2 2M6 0h9v9H8L5 5z" fill="#ccc" stroke="#ccc" strokeWidth=".5" />
            </Svg>
          </div>
          <div className="w-[24px]">
            <NewPage />
          </div>
          <Trash color="#666" />
        </div>
        <Grip />
      </div>
    </div>
  );
}

function RightPanels() {
  return (
    <div className="flex w-[230px] shrink-0 flex-col border-l border-[#2a2a2a] bg-[#2f2f2f]">
      <div className="flex h-[13px] shrink-0 items-center justify-end pr-[3px]">
        <Tri dir="right" size={5} className="fill-[#bbb]" />
        <Tri dir="right" size={5} className="fill-[#bbb]" />
      </div>
      <ColorPanel />
      <SwatchesPanel />
      <GradientPanel />
      <AppearancePanel />
      <LayersPanel />
    </div>
  );
}

function Squares({ a, b }: { a: string; b: string }) {
  return (
    <div className="relative h-[16px] w-[16px]">
      <div className={`absolute left-0 top-0 h-[11px] w-[11px] border ${a}`} />
      <div className={`absolute bottom-0 right-0 h-[11px] w-[11px] border ${b}`} />
    </div>
  );
}

function PathfinderPanel() {
  return (
    <div className="absolute left-[1332px] top-[42px] h-[135px] w-[233px] border border-[#222] bg-[#474747] text-[10px] shadow-[0_1px_6px_rgba(0,0,0,0.4)]">
      <div className="flex h-[13px] items-center justify-end gap-[9px] bg-[#333] pr-[6px] text-[9px] leading-none text-[#ddd]">
        <DoubleLeft className="fill-[#ddd]" />
        <span>✕</span>
      </div>
      <div className="flex h-[17px] bg-[#333] leading-[17px]">
        <div className="flex w-[62px] items-center justify-center border-r border-[#222] text-[#9a9a9a]">Transform</div>
        <div className="flex w-[40px] items-center justify-center border-r border-[#222] text-[#9a9a9a]">Align</div>
        <div className="flex w-[65px] items-center justify-center border-r border-[#222] bg-[#474747] font-medium text-[#e4e4e4]">Pathfinder</div>
        <div className="ml-auto mr-[4px] flex items-center">
          <PanelMenu />
        </div>
      </div>
      <div className="pl-[5px] pt-[6px] text-[#cfcfcf]">
        <div className="h-[14px] leading-[14px]">Shape Modes:</div>
        <div className="mt-[5px] flex h-[24px] items-center">
          <div className="ml-[5px] w-[34px] shrink-0">
            <Squares a="border-[#ccc] bg-[#888]" b="border-[#ccc] bg-[#888]" />
          </div>
          <div className="w-[37px] shrink-0">
            <Squares a="border-[#ccc] bg-[#474747]" b="border-[#777] bg-transparent" />
          </div>
          <div className="w-[35px] shrink-0">
            <Squares a="border-[#ccc] bg-transparent" b="border-[#ccc] bg-transparent" />
          </div>
          <div className="w-[32px] shrink-0">
            <Squares a="border-[#ccc] bg-transparent" b="border-[#ccc] bg-[#777]" />
          </div>
          <div className="flex h-[19px] w-[75px] shrink-0 items-center justify-center border border-[#333] bg-[#555] text-[#888]">Expand</div>
        </div>
        <div className="mt-[6px] h-[14px] leading-[14px]">Pathfinders:</div>
        <div className="mt-[8px] flex h-[18px] items-center pl-[8px]">
          {[
            ["border-[#ccc]", "border-[#ccc]"],
            ["border-[#ddd] bg-[#ddd]", "border-[#aaa] bg-[#aaa]"],
            ["border-[#ccc] bg-[#bbb]", "border-[#aaa] bg-[#aaa]"],
            ["border-[#777] bg-[#666]", "border-[#999] bg-[#aaa]"],
            ["border-[#ddd]", "border-[#ddd]"],
            ["border-[#777]", "border-[#ccc]"],
          ].map(([a, b], i) => (
            <div key={i} className="w-[37px] shrink-0">
              <Squares a={a} b={b} />
            </div>
          ))}
        </div>
      </div>
      <div className="pointer-events-none absolute left-[-8px] top-[45px] h-[42px] w-[50px] border-[3px] border-[#c00000] shadow-[3px_3px_5px_rgba(0,0,0,0.25)]" />
    </div>
  );
}

function Canvas() {
  return (
    <div className="relative flex-1 overflow-hidden bg-white">
      <svg viewBox="73 84 1596 976" className="absolute inset-0 h-full w-full">
        <defs>
          <filter id="arrowShadow" x="-30%" y="-30%" width="170%" height="170%">
            <feDropShadow dx="4" dy="4" stdDeviation="2.500" floodColor="#000" floodOpacity="0.55" />
          </filter>
        </defs>
        <path
          fillRule="evenodd"
          d="M598 310C598 256 625 230 664 230C682 230 700 236 715 244L1058 488C1085 510 1101 540 1101 572C1101 605 1085 634 1058 656L715 900C700 909 682 916 664 916C625 916 598 889 598 834ZM703 367L703 770L987 568.500Z"
          fill="#000"
        />
        <path d="M598 161L1178 573L598 983Z" fill="none" stroke="#4f7dff" strokeWidth="1" />
        <rect x="596" y="159" width="4" height="4" fill="#4f7dff" />
        <rect x="1176" y="571" width="4" height="4" fill="#4f7dff" />
        <rect x="596" y="981" width="4" height="4" fill="#4f7dff" />
        <g filter="url(#arrowShadow)" fill="#c00000">
          <line x1="1230" y1="403" x2="1104" y2="539" stroke="#c00000" strokeWidth="3.500" />
          <polygon points="1097,547 1100,533 1112,543" />
          <line x1="1234" y1="412" x2="1169" y2="547" stroke="#c00000" strokeWidth="3.500" />
          <polygon points="1163,558 1163,542 1177,550" />
        </g>
      </svg>
      <PathfinderPanel />
    </div>
  );
}

function VScroll() {
  return (
    <div className="relative flex w-[18px] shrink-0 flex-col items-center justify-between bg-[#3e3e3e] py-[5px]">
      <Tri dir="up" size={8} />
      <div className="absolute left-[1px] top-[480px] h-[15px] w-[15px] bg-[#a0a0a0]" />
      <Tri dir="down" size={8} />
    </div>
  );
}

function StatusBar() {
  return (
    <div className="flex h-[18px] shrink-0 items-center border-t border-[#2a2a2a] bg-[#474747] pl-[5px] text-[10px] text-[#d8d8d8]">
      <div className="flex h-[16px] w-[42px] items-center bg-[#a3a3a3] pl-[3px] text-[#111]">228.6%</div>
      <DropBtn className="!h-[16px] w-[15px]" />
      <div className="ml-[7px] flex w-[27px] items-center justify-between">
        <Tri dir="left" size={7} className="fill-[#777]" />
        <Tri dir="left" size={7} className="fill-[#777]" />
      </div>
      <div className="ml-[7px] flex h-[16px] w-[42px] items-center bg-[#a3a3a3] pl-[4px] text-[#111]">1</div>
      <DropBtn className="!h-[16px] w-[14px]" />
      <div className="ml-[8px] flex w-[27px] items-center justify-between">
        <Tri dir="right" size={7} className="fill-[#777]" />
        <Tri dir="right" size={7} className="fill-[#777]" />
      </div>
      <div className="ml-[11px] w-[198px] text-center">Rounded Rectangle</div>
      <div className="flex w-[18px] justify-center">
        <Tri dir="right" size={8} />
      </div>
      <div className="ml-[4px] flex w-[12px] justify-center">
        <Tri dir="left" size={8} />
      </div>
      <div className="relative ml-[3px] h-full flex-1 bg-[#333]">
        <div className="absolute left-[560px] top-[1px] h-[15px] w-[14px] bg-[#8a8a8a]" />
      </div>
      <div className="flex w-[27px] justify-center bg-[#333]">
        <Tri dir="right" size={8} />
      </div>
    </div>
  );
}

export default function App() {
  return (
    <div className="flex h-[1078px] w-[1917px] flex-col overflow-hidden bg-[#474747] font-['Noto_Sans',sans-serif] text-[11px] text-[#d0d0d0]">
      <svg width="0" height="0" className="absolute">
        <defs>
          <linearGradient id="toolgrad" x1="0" x2="1" y1="0" y2="0">
            <stop offset="0" stopColor="#555" />
            <stop offset="1" stopColor="#bbb" />
          </linearGradient>
        </defs>
      </svg>
      <MenuBar />
      <ControlBar />
      <div className="flex min-h-0 flex-1">
        <LeftToolbar />
        <div className="flex w-[1614px] shrink-0 flex-col">
          <div className="flex h-[21px] shrink-0 bg-[#2f2f2f]">
            <div className="flex w-[224px] items-center justify-between border-r border-[#222] bg-[#474747] pl-[9px] pr-[7px] pt-px text-[11px] text-[#d8d8d8]">
              <span>Untitled-1* @ 228.6% (RGB/Preview)</span>
              <span className="text-[9px]">✕</span>
            </div>
          </div>
          <div className="flex min-h-0 flex-1">
            <Canvas />
            <VScroll />
          </div>
          <StatusBar />
        </div>
        <RightPanels />
      </div>
    </div>
  );
}
